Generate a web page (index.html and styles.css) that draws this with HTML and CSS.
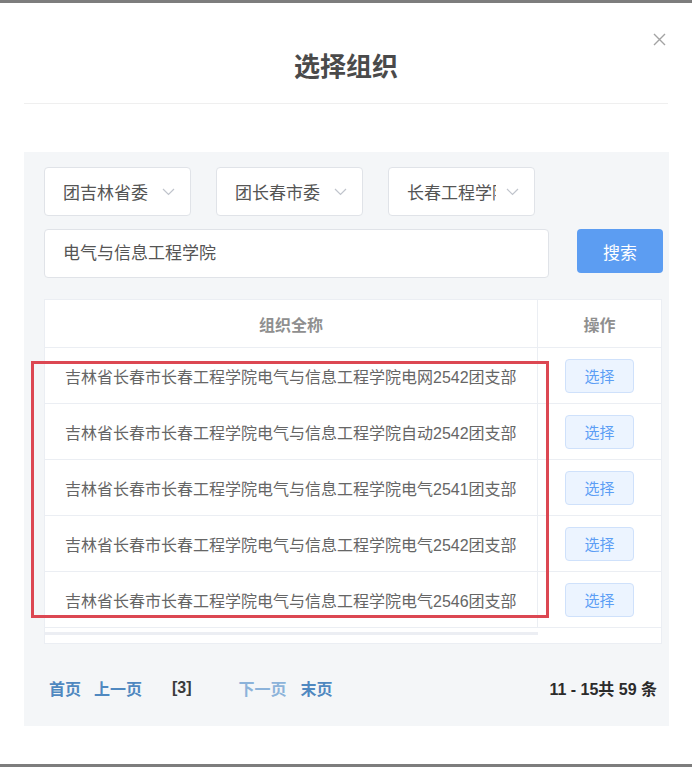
FILE: index.html
```html
<!DOCTYPE html>
<html>
<head>
    <meta charset="utf-8">
    <title>选择组织</title>
    <link rel="stylesheet" href="styles.css">
</head>
<body>
<div id="dialog">
    <div class="dialog-header">
        <h2 class="dialog-title">选择组织</h2>
        <button class="close-btn" aria-label="关闭">
            <svg width="13" height="13" viewBox="0 0 13 13"><path d="M1 1L12 12M12 1L1 12" stroke="#a3a3a3" stroke-width="1.4" fill="none"/></svg>
        </button>
    </div>

    <div class="panel">
        <div class="select-row">
            <div class="select"><span class="select-text">团吉林省委</span><svg class="arrow" width="13" height="8" viewBox="0 0 13 8"><path d="M1 1L6.5 6.5L12 1" stroke="#c0c4cc" stroke-width="1.2" fill="none"/></svg></div>
            <div class="select"><span class="select-text">团长春市委</span><svg class="arrow" width="13" height="8" viewBox="0 0 13 8"><path d="M1 1L6.5 6.5L12 1" stroke="#c0c4cc" stroke-width="1.2" fill="none"/></svg></div>
            <div class="select"><span class="select-text">长春工程学院</span><svg class="arrow" width="13" height="8" viewBox="0 0 13 8"><path d="M1 1L6.5 6.5L12 1" stroke="#c0c4cc" stroke-width="1.2" fill="none"/></svg></div>
        </div>

        <div class="search-row">
            <div class="search-input">电气与信息工程学院</div>
            <button class="search-btn">搜索</button>
        </div>

        <div class="table">
            <div class="tr th">
                <div class="td name">组织全称</div>
                <div class="td op">操作</div>
            </div>
            <div class="tr">
                <div class="td name">吉林省长春市长春工程学院电气与信息工程学院电网2542团支部</div>
                <div class="td op"><button class="pick-btn">选择</button></div>
            </div>
            <div class="tr">
                <div class="td name">吉林省长春市长春工程学院电气与信息工程学院自动2542团支部</div>
                <div class="td op"><button class="pick-btn">选择</button></div>
            </div>
            <div class="tr">
                <div class="td name">吉林省长春市长春工程学院电气与信息工程学院电气2541团支部</div>
                <div class="td op"><button class="pick-btn">选择</button></div>
            </div>
            <div class="tr">
                <div class="td name">吉林省长春市长春工程学院电气与信息工程学院电气2542团支部</div>
                <div class="td op"><button class="pick-btn">选择</button></div>
            </div>
            <div class="tr">
                <div class="td name">吉林省长春市长春工程学院电气与信息工程学院电气2546团支部</div>
                <div class="td op"><button class="pick-btn">选择</button></div>
            </div>
            <div class="table-foot"><div class="scrollbar"></div></div>
        </div>

        <div class="pager">
            <a class="pg-link first">首页</a>
            <a class="pg-link prev">上一页</a>
            <span class="pg-current">[3]</span>
            <a class="pg-link light next">下一页</a>
            <a class="pg-link last">末页</a>
            <span class="pg-total">11 - 15共 59 条</span>
        </div>
    </div>

    <div class="highlight"></div>
</div>
</body>
</html>
```

FILE: styles.css
```css
* {
    padding: 0;
    margin: 0;
    box-sizing: border-box;
}

body {
    background-color: #fff;
    font-family: "Liberation Sans", "Noto Sans CJK SC", sans-serif;
    color: #555;
}

#dialog {
    position: relative;
    height: 767px;
    border-top: 3px solid #7d7d7d;
    border-bottom: 3px solid #7d7d7d;
    background-color: #fff;
}

.dialog-header {
    margin: 0 24px;
    padding: 44px 0 16px;
    border-bottom: 1px solid #efefef;
}

.dialog-title {
    font-size: 26px;
    line-height: 40px;
    font-weight: bold;
    text-align: center;
    color: #4a4a4a;
}

.close-btn {
    position: absolute;
    top: 30px;
    right: 26px;
    border: none;
    background: none;
    width: 13px;
    height: 13px;
    cursor: pointer;
}

.close-btn svg {
    display: block;
}

.panel {
    margin: 48px 23px 0 24px;
    padding: 15px 6px 18px 20px;
    background-color: #f4f6f8;
}

.select-row {
    display: flex;
    gap: 25px;
    height: 49px;
}

.select {
    width: 147px;
    height: 49px;
    display: flex;
    align-items: center;
    gap: 10px;
    padding: 0 15px 0 18px;
    border: 1px solid #e0e3e8;
    border-radius: 4px;
    background-color: #fff;
    font-size: 17px;
    color: #555;
}

.select-text {
    flex: 1;
    overflow: hidden;
    white-space: nowrap;
}

.arrow {
    flex-shrink: 0;
}

.search-row {
    display: flex;
    align-items: flex-start;
    margin-top: 13px;
}

.search-input {
    width: 505px;
    height: 49px;
    line-height: 47px;
    padding-left: 18px;
    border: 1px solid #e0e3e8;
    border-radius: 4px;
    background-color: #fff;
    font-size: 17px;
    color: #555;
}

.search-btn {
    margin-left: 28px;
    width: 86px;
    height: 44px;
    border: none;
    border-radius: 4px;
    background-color: #5c9df2; /* primary blue */
    color: #fff;
    font-family: inherit;
    font-size: 17px;
    cursor: pointer;
}

.table {
    margin-top: 21px;
    width: 618px;
    border: 1px solid #ebeef3;
    background-color: #fff;
}

.tr {
    display: flex;
    height: 56px;
    border-bottom: 1px solid #ebeef3;
}

.tr.th {
    height: 48px;
}

.td {
    display: flex;
    align-items: center;
}

.td.name {
    width: 493px;
    padding-left: 20px;
    border-right: 1px solid #ebeef3;
    font-size: 16px;
    color: #666;
    white-space: nowrap;
}

.td.op {
    flex: 1;
    justify-content: center;
}

.th .td {
    justify-content: center;
    padding-left: 0;
    font-size: 16px;
    font-weight: bold;
    color: #8f8f8f;
}

.pick-btn {
    width: 69px;
    height: 34px;
    border: 1px solid #cfe1fb;
    border-radius: 4px;
    background-color: #ecf4ff;
    color: #5c9ef5;
    font-family: inherit;
    font-size: 15px;
    cursor: pointer;
}

.table-foot {
    height: 15px;
    padding-top: 4px;
}

.scrollbar {
    width: 493px;
    height: 3px;
    background-color: #eceef3;
}

.pager {
    display: flex;
    align-items: center;
    height: 40px;
    margin-top: 24px;
    padding-left: 5px;
    font-size: 16px;
}

.pg-link {
    color: #4f88c0;
    font-weight: bold;
    cursor: pointer;
}

.pg-link.light {
    color: #8cb3da;
}

.prev {
    margin-left: 13px;
}

.pg-current {
    margin-left: 30px;
    font-weight: bold;
    color: #3a3a3a;
}

.next {
    margin-left: 47px;
}

.last {
    margin-left: 14px;
}

.pg-total {
    margin-left: auto;
    margin-right: 6px;
    font-weight: bold;
    color: #2b2b2b;
}

/* annotation frame over the result rows */
.highlight {
    position: absolute;
    left: 31px;
    top: 358px;
    width: 518px;
    height: 257px;
    border: 3px solid #dc4752;
    pointer-events: none;
}
```
